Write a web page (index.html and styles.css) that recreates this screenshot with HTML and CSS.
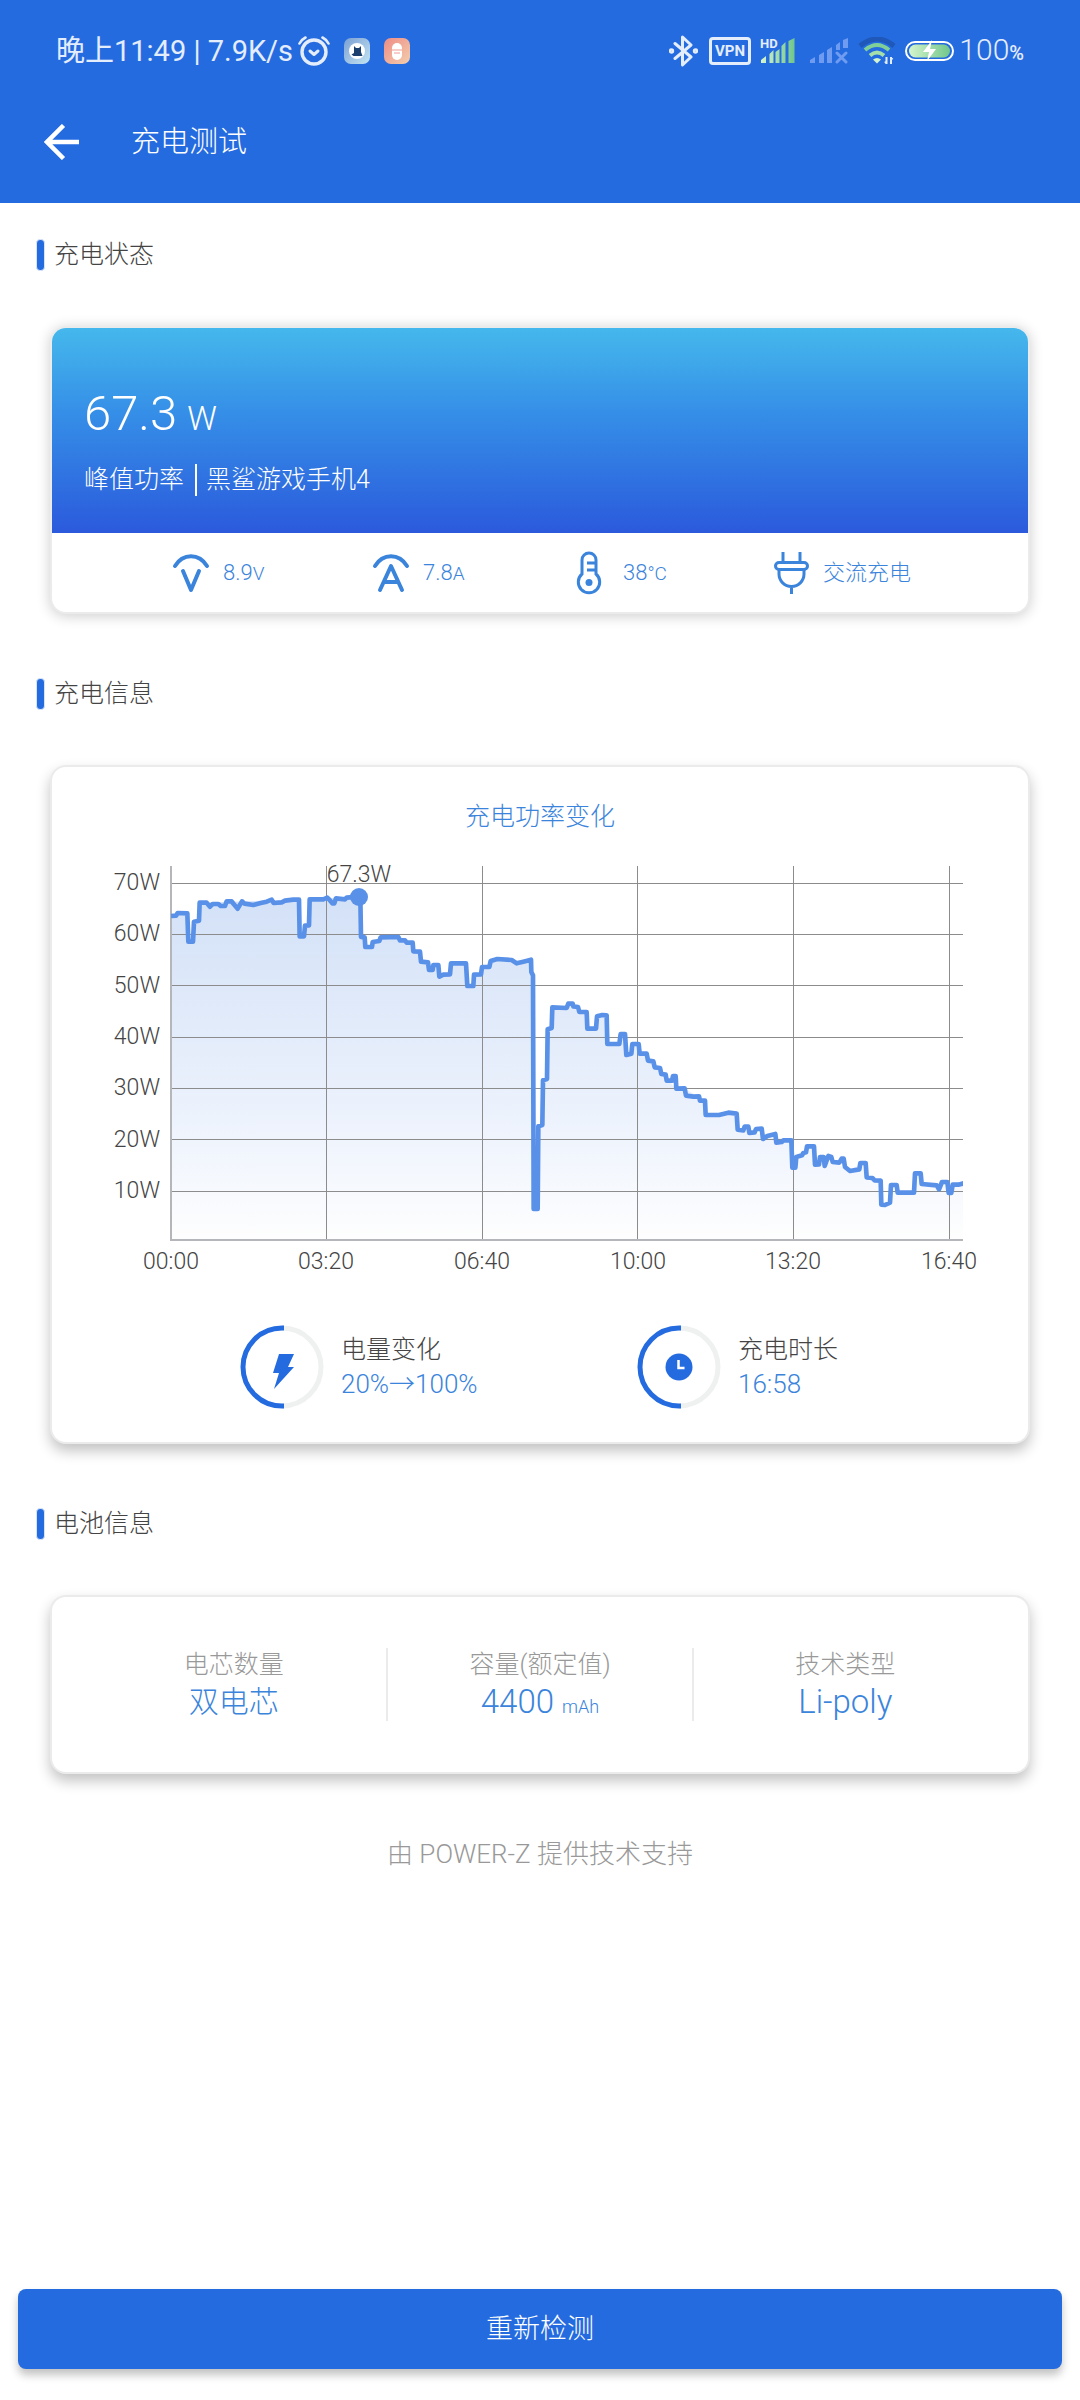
FILE: index.html
```html
<!DOCTYPE html>
<html lang="zh-CN">
<head>
<meta charset="utf-8">
<meta name="viewport" content="width=device-width, initial-scale=1">
<title>充电测试</title>
<link rel="stylesheet" href="styles.css">
</head>
<body>
<header class="top">
  <div class="status">
    <span class="status-text">晚上11:49 | 7.9K/s</span>
    <svg class="ico-alarm" width="32" height="30" viewBox="0 0 32 30" fill="none" stroke="#e4edfc" stroke-linecap="round">
      <circle cx="16" cy="16" r="12" stroke-width="3.4"/>
      <path d="M12 15l4 3.5 4-3.5" stroke-width="3" stroke-linejoin="round"/>
      <path d="M1.5 7.500Q3.500 3.500 7.500 1.500M24.500 1.500Q28.500 3.500 30.500 7.500" stroke-width="2.600"/>
    </svg>
    <svg class="ico-app" width="26" height="26" viewBox="0 0 26 26">
      <defs><linearGradient id="appBlue" x1="0" y1="0" x2="1" y2="1"><stop offset="0" stop-color="#7ba0d4"/><stop offset="1" stop-color="#c3e4f2"/></linearGradient></defs>
      <rect width="26" height="26" rx="7" fill="url(#appBlue)"/>
      <circle cx="13" cy="13" r="8" fill="#fff"/>
      <path d="M10 8l2 2h3l2-2v6l1.500 4h-9L7.500 16.500 10 15z" fill="#1d3f6d"/>
    </svg>
    <svg class="ico-app" width="26" height="26" viewBox="0 0 26 26">
      <defs><linearGradient id="appPink" x1="0" y1="0" x2="1" y2="1"><stop offset="0" stop-color="#ee8c86"/><stop offset="1" stop-color="#f3ceac"/></linearGradient></defs>
      <rect width="26" height="26" rx="7" fill="url(#appPink)"/>
      <rect x="8" y="5" width="10" height="17" rx="5" fill="#fff"/>
      <path d="M8 12h10M10 15h6" stroke="#ee9d90" stroke-width="1"/>
    </svg>
    <div class="status-right">
      <svg width="29" height="32" viewBox="0 0 29 32" fill="none" stroke="#e4edfc" stroke-width="3" stroke-linejoin="round" stroke-linecap="round">
        <path d="M6 8.500L22 22l-8.500 8V2L22 10 6 23.500"/><circle cx="2.500" cy="16" r="1.200"/><circle cx="26.500" cy="16" r="1.200"/>
      </svg>
      <svg class="ico-vpn" width="42" height="28" viewBox="0 0 42 28">
        <rect x="1.500" y="1.500" width="39" height="25" rx="2.500" fill="none" stroke="#e4edfc" stroke-width="3"/>
        <text x="21" y="19" class="vpn-text" text-anchor="middle">VPN</text>
      </svg>
      <svg class="ico-signal" width="36" height="34" viewBox="0 -4 36 34">
        <defs><linearGradient id="sig" x1="0" x2="1"><stop offset="0" stop-color="#d5f5cd"/><stop offset="1" stop-color="#71c68c"/></linearGradient></defs>
        <path d="M1 25v-3l5-4v7zM9.500 25v-9l4-4v13zM15.500 25v-11l4-3v14zM21.500 25V8l4-4v21zM28.500 25V3l6-3v25z" fill="url(#sig)"/>
        <text x="0" y="10" class="hd-text">HD</text>
      </svg>
      <svg class="ico-nosim" width="39" height="26" viewBox="0 0 39 26" fill="#6f9cf0">
        <path d="M0 25v-3l5-3v6zM9 25v-8l5-3v11zM17 25V12l5-3v16zM26 12V7l4-3v8zM33 10V2l5-2v10z"/>
        <path d="M27 15l9 9M36 15l-9 9" stroke="#6f9cf0" stroke-width="3" stroke-linecap="round"/>
      </svg>
      <svg class="ico-wifi" width="38" height="28" viewBox="0 0 38 28" fill="none" stroke-width="4">
        <path d="M2 9Q19-5 36 9" stroke="#1f58b8" stroke-width="5"/>
        <path d="M7 13Q19 3 31 13" stroke="#7fcf97"/><path d="M12 18.500Q19 12.500 26 18.500" stroke="#a5dfa9"/>
        <path d="M15 22.500q4-3 8 0l-4 4z" fill="#d5f5cd"/>
        <path d="M28.500 20v7M27 24.500l1.500 2M33 27v-7M34.500 22.500l-1.500-2" stroke="#e4edfc" stroke-width="2"/>
      </svg>
      <svg width="50" height="24" viewBox="0 0 50 24">
        <rect x="1" y="3" width="47" height="18" rx="9" fill="none" stroke="#fff" stroke-width="2"/>
        <rect x="4" y="5.500" width="41" height="13" rx="6.500" fill="url(#sig)"/>
        <path d="M27 1l-9 12h6l-2 9 9-12h-6z" fill="#fff"/>
      </svg>
      <span class="status-text pct">100<small>%</small></span>
    </div>
  </div>
  <div class="bar">
    <button class="back" aria-label="返回">
      <svg width="36" height="36" viewBox="0 0 36 36" fill="none" stroke="#fff" stroke-width="4.500"><path d="M19.500 1.500L3 18l16.500 16.500M3 18h32"/></svg>
    </button>
    <h1>充电测试</h1>
  </div>
</header>

<main>
  <section>
    <h2>充电状态</h2>
    <div class="card card-soft">
      <div class="hero">
        <p class="peak">67.3<span>W</span></p>
        <p class="device"><span>峰值功率</span><span class="device-name">黑鲨游戏手机4</span></p>
      </div>
      <ul class="metrics">
        <li>
          <svg width="38" height="44" viewBox="0 0 38 44" fill="none" stroke="#3b84dc" stroke-width="4" stroke-linecap="round" stroke-linejoin="round"><path d="M3 15C11 2 27 2 35 15M11 20l8 19 8-19"/></svg>
          <span>8.9<small>V</small></span>
        </li>
        <li>
          <svg width="38" height="44" viewBox="0 0 38 44" fill="none" stroke="#3b84dc" stroke-width="4" stroke-linecap="round" stroke-linejoin="round"><path d="M3 15C11 2 27 2 35 15M8 39l11-24 11 24M12 31h14"/></svg>
          <span>7.8<small>A</small></span>
        </li>
        <li>
          <svg width="38" height="44" viewBox="0 0 38 44" fill="none" stroke="#3b84dc" stroke-width="3"><path d="M10 23V9a7 7 0 0 1 14 0v14a10.700 10.700 0 1 1-14 0zM15 12h8M15 19h8"/><circle cx="17" cy="31.500" r="3.500" fill="#3b84dc" stroke="none"/></svg>
          <span>38<small>°C</small></span>
        </li>
        <li>
          <svg width="38" height="44" viewBox="0 0 38 44" fill="none" stroke="#3b84dc" stroke-width="3"><path d="M11 1v10M28 1v10M7 19v4a12 12 0 0 0 25 0v-4M19.500 35v8"/><rect x="3.500" y="11.500" width="32" height="7" rx="3.500"/></svg>
          <span>交流充电</span>
        </li>
      </ul>
    </div>
  </section>

  <section>
    <h2>充电信息</h2>
    <div class="card">
      <h3>充电功率变化</h3>
      <svg class="chart" viewBox="52 860 976 416" role="img" aria-label="充电功率变化">
        <defs><linearGradient id="area" x1="0" y1="0" x2="0" y2="1"><stop offset="0" stop-color="#d3e1f7"/><stop offset=".7" stop-color="#eff4fd"/><stop offset="1" stop-color="#fefefe"/></linearGradient></defs>
        <svg x="171" y="867" width="792" height="374" viewBox="243 262 2376 1122">
          <path fill="url(#area)" d="M243 412L263 403 292 404 295 489 309 489 312 429 327 426 329 372 627 363 629 473 642 473 645 441 657 440 659 362 811 354 813 475 824 476 826 505 846 505 848 490 868 487 872 476 925 475 968 492 970 518 990 519 993 549 1014 551 1017 574 1028 574 1030 559 1045 559 1048 594 1060 588 1080 587 1083 554 1128 554 1132 622 1150 622 1152 588 1173 587 1176 565 1198 565 1202 547 1222 541 1265 544 1280 554 1323 543 1329 590 1331 1291 1343 1291 1345 1043 1357 1039 1359 905 1371 901 1373 752 1385 748 1387 686 1430 688 1435 675 1464 685 1468 700 1490 700 1492 750 1518 750 1521 713 1550 710 1552 796 1588 796 1592 766 1605 766 1609 829 1624 825 1627 796 1646 796 1649 825 1670 825 1757 930 1784 929 1845 966 1847 1009 1940 1005 1943 1053 2104 1085 2107 1167 2116 1167 2151 1103 2172 1103 2175 1158 2228 1150 2280 1177 2311 1153 2327 1153 2330 1196 2372 1206 2374 1278 2400 1272 2403 1219 2420 1219 2423 1242 2472 1242 2475 1184 2492 1184 2495 1216 2619 1213V1384H243z"/>
        </svg>
        <g class="grid">
          <path d="M171 884.500H963M171 935.500H963M171 986.500H963M171 1038.500H963M171 1089.500H963M171 1140.500H963M171 1192.500H963"/>
          <path d="M326.500 867V1241M482.500 867V1241M637.500 867V1241M793.500 867V1241M949.500 867V1241"/>
        </g>
        <path class="axis" d="M171 867V1241H963"/>
        <svg x="171" y="867" width="792" height="374" viewBox="243 262 2376 1122">
          <polyline class="line" points="243,412 258,411 263,403 292,404 295,489 309,489 312,429 327,426 329,372 350,372 360,384 368,376 385,376 392,382 405,382 410,368 425,368 431,376 443,390 456,368 464,375 490,379 512,373 530,369 545,363 551,373 575,371 585,366 610,363 627,363 629,473 642,473 645,441 657,440 659,362 700,362 712,357 717,362 727,374 733,374 738,359 765,362 770,357 806,354 811,354 813,475 824,476 826,505 846,505 848,490 868,487 872,476 925,475 930,485 945,485 950,492 968,492 970,518 990,519 993,549 1014,551 1017,574 1028,574 1030,559 1045,559 1048,594 1060,588 1080,587 1083,554 1128,554 1132,622 1150,622 1152,588 1173,587 1176,565 1198,565 1202,547 1222,541 1265,544 1280,554 1300,549 1323,543 1324,580 1329,590 1331,1291 1343,1291 1345,1043 1357,1039 1359,905 1371,901 1373,752 1385,748 1387,686 1430,688 1435,675 1448,675 1450,683 1464,685 1468,700 1490,700 1492,750 1518,750 1521,713 1537,709 1550,710 1552,796 1588,796 1592,766 1605,766 1609,829 1624,825 1627,796 1646,796 1649,825 1670,825 1674,846 1690,848 1694,866 1710,868 1714,886 1727,888 1730,906 1746,906 1749,892 1757,892 1759,930 1784,929 1788,951 1810,954 1827,953 1830,966 1845,966 1847,1009 1887,1009 1915,1002 1940,1005 1943,1053 1960,1055 1964,1044 1975,1044 1978,1063 1994,1061 1998,1051 2015,1050 2019,1081 2032,1072 2056,1066 2059,1092 2075,1090 2080,1085 2104,1085 2107,1167 2116,1167 2119,1135 2136,1130 2140,1123 2148,1121 2151,1103 2172,1103 2175,1158 2187,1157 2190,1135 2201,1135 2204,1162 2215,1132 2224,1135 2228,1150 2248,1152 2255,1140 2261,1140 2265,1165 2280,1177 2308,1172 2311,1153 2327,1153 2330,1196 2347,1198 2354,1205 2372,1206 2374,1278 2385,1279 2400,1272 2403,1219 2420,1219 2423,1242 2472,1242 2475,1184 2492,1184 2495,1216 2540,1220 2547,1232 2556,1210 2572,1210 2576,1243 2584,1243 2588,1218 2605,1218 2625,1213"/>
        </svg>
        <circle cx="359" cy="898" r="9" fill="#5a91e8"/>
        <g class="tick" text-anchor="end">
          <text x="160" y="891">70W</text><text x="160" y="942">60W</text><text x="160" y="994">50W</text><text x="160" y="1045">40W</text><text x="160" y="1096">30W</text><text x="160" y="1148">20W</text><text x="160" y="1199">10W</text>
        </g>
        <g class="tick" text-anchor="middle">
          <text x="359" y="883">67.3W</text>
          <text x="171" y="1270">00:00</text><text x="326" y="1270">03:20</text><text x="482" y="1270">06:40</text><text x="638" y="1270">10:00</text><text x="793" y="1270">13:20</text><text x="949" y="1270">16:40</text>
        </g>
      </svg>
      <dl class="stats">
        <div class="stat">
          <svg width="84" height="84" viewBox="0 0 84 84" fill="none" stroke-width="5"><path d="M42 3a39 39 0 0 1 0 78" stroke="#eff0f0"/><path d="M44 3h-2a39 39 0 0 0 0 78h2" stroke="#256be0"/><path d="M39 29h15l-6 13h6L34 64l5-16h-6z" fill="#256be0"/></svg>
          <div><dt>电量变化</dt><dd>20%→100%</dd></div>
        </div>
        <div class="stat">
          <svg width="84" height="84" viewBox="0 0 84 84" fill="none" stroke-width="5"><path d="M42 3a39 39 0 0 1 0 78" stroke="#eff0f0"/><path d="M44 3h-2a39 39 0 0 0 0 78h2" stroke="#256be0"/><circle cx="42" cy="42" r="13.500" fill="#256be0"/><path d="M41.500 35v8h6" stroke="#fff" stroke-width="2.500"/></svg>
          <div><dt>充电时长</dt><dd>16:58</dd></div>
        </div>
      </dl>
    </div>
  </section>

  <section>
    <h2>电池信息</h2>
    <dl class="card battery">
      <div><dt>电芯数量</dt><dd>双电芯</dd></div>
      <div><dt>容量(额定值)</dt><dd class="latin">4400 <small>mAh</small></dd></div>
      <div><dt>技术类型</dt><dd class="latin">Li-poly</dd></div>
    </dl>
  </section>
  <p class="credit">由 POWER-Z 提供技术支持</p>
</main>

<footer><button class="retest">重新检测</button></footer>
</body>
</html>
```
FILE: styles.css
```css
* { box-sizing: border-box; margin: 0; padding: 0; }
body {
  display: flex;
  flex-direction: column;
  min-height: 100vh;
  background: #fff;
  color: #444;
  font-family: Roboto, "Noto Sans CJK SC", sans-serif;
  font-weight: 300;
  font-size: 25px;
  line-height: 30px;
}
h1, h2, h3, button { font: inherit; }
ul { list-style: none; }
svg { display: block; flex: none; }
button { border: 0; background: none; color: #fff; }

.top { background: #256be0; color: #fff; padding-bottom: 21px; }
.status {
  display: flex;
  align-items: center;
  height: 102px;
  padding: 0 56px;
}
.status-text { font-size: 29px; line-height: 40px; color: #e4edfc; font-weight: 400; white-space: nowrap; }
.ico-alarm { margin-left: 5px; }
.ico-app { margin-left: 14px; }
.status-right { display: flex; align-items: center; margin-left: auto; }
.ico-vpn { margin-left: 11px; }
.vpn-text { font: 700 15px Roboto, sans-serif; fill: #e4edfc; }
.hd-text { font: 700 13px Roboto, sans-serif; fill: #e4edfc; }
.ico-signal { margin-left: 9px; }
.ico-nosim { margin-left: 14px; }
.ico-wifi { margin: 0 9px; }
.pct { font-size: 30px; font-weight: 300; margin-left: 4px; }
.pct small { font-size: 20px; font-weight: 500; }
.bar { display: flex; align-items: center; height: 80px; padding: 0 44px; gap: 51px; }
.back { cursor: pointer; }
.bar h1 { font-size: 29px; line-height: 36px; }

main { padding-top: 37px; }
h2 {
  display: flex;
  align-items: center;
  gap: 9px;
  height: 30px;
  padding-left: 36px;
}
h2::before {
  content: "";
  width: 7px;
  height: 30px;
  border: 1px solid #d5e4fa;
  border-radius: 4px;
  background: #256be0;
}
.card {
  margin: 56px 50px 65px;
  border: 2px solid #ebebeb;
  border-radius: 16px;
  background: #fff;
  box-shadow: 0 7px 14px rgba(0, 0, 0, .24);
  overflow: hidden;
}
.card-soft { box-shadow: 0 2px 14px rgba(0, 0, 0, .2); }

.hero {
  padding: 54px 32px 36px;
  background: linear-gradient(#45b8ec, #358ee7 42%, #2b5adc);
  color: #fff;
}
.peak { display: flex; align-items: baseline; gap: 10px; height: 64px; font-size: 49px; line-height: 64px; }
.peak span { font-size: 33px; }
.device { display: flex; align-items: center; height: 34px; margin-top: 17px; line-height: 32px; }
.device-name { margin-left: 11px; padding-left: 9px; border-left: 2px solid #fff; }
.metrics {
  display: grid;
  grid-template-columns: repeat(4, 1fr);
  padding: 18px 56px 17px 120px;
  color: #3b84dc;
  font-size: 22px;
}
.metrics li { display: flex; align-items: center; gap: 13px; white-space: nowrap; }
.metrics small { font-size: 19px; }

h3 { margin-top: 35px; text-align: center; color: #3b84dc; }
.chart { width: 100%; height: auto; margin-top: 27px; }
.grid path { stroke: #8c8c8c; stroke-width: 1px; fill: none; }
.axis { stroke: #b4b6b9; stroke-width: 2px; fill: none; }
.line { fill: none; stroke: #5a91e8; stroke-width: 14px; stroke-linejoin: round; }
.tick { font-size: 23px; fill: #444; }

.stats {
  display: grid;
  grid-template-columns: 397fr 391fr;
  padding: 50px 0 33px 188px;
}
.stat { display: flex; align-items: center; gap: 17px; }
.stat dt, .stat dd { line-height: 34px; white-space: nowrap; }
.stat dd { font-size: 26px; color: #3b84dc; }

.battery { display: grid; grid-template-columns: repeat(3, 1fr); padding: 51px 31px 51px 29px; text-align: center; }
.battery div + div { border-left: 2px solid #ebebeb; }
.battery dt { height: 36px; line-height: 34px; color: #999; }
.battery dd { height: 37px; font-size: 30px; line-height: 35px; color: #3b84dc; }
.battery .latin { font-size: 33px; }
.battery small { font-size: 18px; }

.credit { font-size: 26px; text-align: center; color: #999; }
footer { margin-top: auto; padding: 31px 18px; }
.retest {
  display: block;
  width: 100%;
  height: 80px;
  border-radius: 8px;
  background: #256be0;
  box-shadow: 0 6px 8px rgba(0, 0, 0, .24);
  font-size: 27px;
  cursor: pointer;
}
```
